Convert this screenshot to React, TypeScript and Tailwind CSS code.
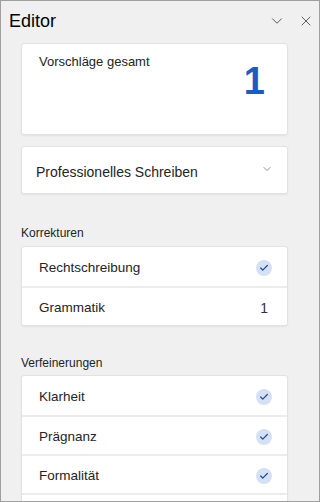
import { ChevronDown, X, Check } from 'lucide-react';

const korrekturen = [
  { label: 'Rechtschreibung', count: 0 },
  { label: 'Grammatik', count: 1 },
];

const verfeinerungen = [
  { label: 'Klarheit', count: 0 },
  { label: 'Prägnanz', count: 0 },
  { label: 'Formalität', count: 0 },
];

const Status = ({ count }: { count: number }) =>
  count > 0 ? (
    <span className="text-[14px] text-[#333] mr-[4px] mt-[3px]">{count}</span>
  ) : (
    <span className="w-[16px] h-[16px] rounded-full bg-[#d5e1f3] flex items-center justify-center mt-[2px]">
      <Check size={10} strokeWidth={3} className="text-[#1d4f9c]" />
    </span>
  );

const Row = ({ label, count, first }: { label: string; count: number; first: boolean }) => (
  <div
    className={`h-[39px] flex items-center justify-between pl-[17px] pr-[15px] ${
      first ? '' : 'border-t-2 border-[#ececec]'
    }`}
  >
    <span className="text-[13.5px] text-[#242424] mt-[4px]">{label}</span>
    <Status count={count} />
  </div>
);

const App = () => {
  return (
    <div
      className="w-[320px] h-[502px] overflow-hidden border border-[#9f9f9f] bg-[#f0f0f0]"
      style={{ fontFamily: '"Liberation Sans", Arial, sans-serif' }}
    >
      {/* Header */}
      <div className="h-[42px] flex items-center justify-between pl-[8px] pr-[5px] pb-[3px]">
        <span className="text-[18px] text-black leading-none">Editor</span>
        <div className="flex items-center gap-[12px] text-[#555]">
          <ChevronDown size={18} strokeWidth={1.3} />
          <X size={16} strokeWidth={1.4} />
        </div>
      </div>

      <div className="pl-[20px] pr-[31px]">
        {/* Total suggestions */}
        <div className="h-[92px] bg-white border border-[#e2e2e2] rounded-[3px] shadow-[0_1px_2px_rgba(0,0,0,0.06)] flex justify-between pl-[17px] pr-[22px] pt-[11px]">
          <span className="text-[13px] text-[#242424] leading-none">Vorschläge gesamt</span>
          <span className="text-[38px] font-bold text-[#1b5cc4] leading-none mt-[7px]">1</span>
        </div>

        {/* Writing style */}
        <div className="mt-[11px] h-[48px] bg-white border border-[#e2e2e2] rounded-[3px] shadow-[0_1px_2px_rgba(0,0,0,0.06)] flex items-center justify-between pl-[14px] pr-[14px]">
          <span className="text-[14px] text-[#242424] mt-[5px]">Professionelles Schreiben</span>
          <ChevronDown size={12} strokeWidth={1.5} className="text-[#666] -mt-[2px]" />
        </div>

        <div className="mt-[33px] text-[12px] text-[#242424] leading-none h-[12px]">Korrekturen</div>
        <div className="mt-[7px] bg-white border border-[#e2e2e2] rounded-[3px] shadow-[0_1px_2px_rgba(0,0,0,0.06)]">
          {korrekturen.map((k, i) => (
            <Row key={k.label} label={k.label} count={k.count} first={i === 0} />
          ))}
        </div>

        <div className="mt-[31px] text-[12px] text-[#242424] leading-none h-[12px]">Verfeinerungen</div>
        <div className="mt-[6px] bg-white border border-[#e2e2e2] rounded-[3px] shadow-[0_1px_2px_rgba(0,0,0,0.06)]">
          {verfeinerungen.map((k, i) => (
            <Row key={k.label} label={k.label} count={k.count} first={i === 0} />
          ))}
          {/* next row, scrolled below the fold */}
          <div className="h-[39px] border-t-2 border-[#ececec]" />
        </div>
      </div>
    </div>
  );
};

export default App;
